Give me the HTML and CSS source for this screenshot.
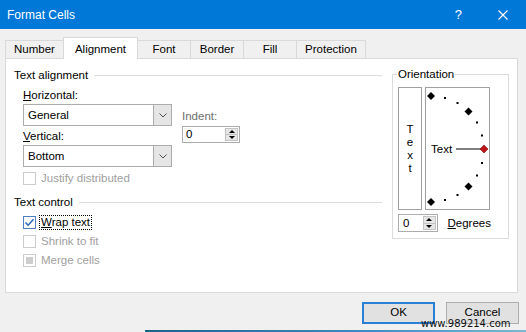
FILE: index.html
```html
<!DOCTYPE html>
<html lang="en">
<head>
    <meta charset="UTF-8">
    <meta name="viewport" content="width=device-width, initial-scale=1.0">
    <title>Format Cells</title>
    <link rel="stylesheet" href="styles.css">
</head>
<body>
    <div class="titlebar">
        <span class="title">Format Cells</span>
        <span class="help">?</span>
        <svg class="close" width="10" height="10" viewBox="0 0 10 10">
            <path d="M0.5 0.5 L9.5 9.5 M9.5 0.5 L0.5 9.5" stroke="#fff" stroke-width="1.1" fill="none"/>
        </svg>
    </div>

    <div class="tabs">
        <div class="tab">Number</div>
        <div class="tab active">Alignment</div>
        <div class="tab">Font</div>
        <div class="tab">Border</div>
        <div class="tab">Fill</div>
        <div class="tab">Protection</div>
    </div>

    <div class="panel">
        <div class="left-col">
            <div class="group-head"><span>Text alignment</span><i></i></div>
            <div class="align-row">
                <div class="align-main">
                    <div class="label"><u>H</u>orizontal:</div>
                    <div class="combo">
                        <span>General</span>
                        <b class="drop"><svg width="8" height="5" viewBox="0 0 8 5"><polyline points="0.5,0.5 4,4 7.5,0.5" fill="none" stroke="#505050"/></svg></b>
                    </div>
                    <div class="label vertical"><u>V</u>ertical:</div>
                    <div class="combo">
                        <span>Bottom</span>
                        <b class="drop"><svg width="8" height="5" viewBox="0 0 8 5"><polyline points="0.5,0.5 4,4 7.5,0.5" fill="none" stroke="#505050"/></svg></b>
                    </div>
                </div>
                <div class="indent-col">
                    <div class="label muted">Indent:</div>
                    <div class="spin indent">
                        <span>0</span>
                        <div class="arrows"><b class="up"></b><b class="down"></b></div>
                    </div>
                </div>
            </div>
            <div class="check disabled justify"><b class="box"></b><span>Justify distributed</span></div>

            <div class="group-head control"><span>Text control</span><i></i></div>
            <div class="check wrap">
                <b class="box checked"><svg width="11" height="11" viewBox="0 0 11 11"><polyline points="1.5,5.5 4.2,8.2 9.5,2.2" fill="none" stroke="#2a66b8" stroke-width="1.5"/></svg></b>
                <span class="focus"><u>W</u>rap text</span>
            </div>
            <div class="check disabled"><b class="box"></b><span>Shrink to fit</span></div>
            <div class="check disabled"><b class="box mixed"></b><span>Merge cells</span></div>
        </div>

        <fieldset class="orient">
            <legend>Orientation</legend>
            <div class="orient-boxes">
                <div class="vtext"><span>T</span><span>e</span><span>x</span><span>t</span></div>
                <div class="dial">
                    <svg width="63" height="121" viewBox="0 0 63 121">
                        <polygon points="5,4 9,8 5,12 1,8" fill="#000"/>
                        <rect x="18" y="9" width="2" height="2" fill="#000"/>
                        <rect x="30.5" y="14" width="2" height="2" fill="#000"/>
                        <polygon points="42.5,19.5 46.5,23.5 42.5,27.5 38.5,23.5" fill="#000"/>
                        <rect x="50" y="33.5" width="2" height="2" fill="#000"/>
                        <rect x="55" y="46.5" width="2" height="2" fill="#000"/>
                        <text x="5" y="65">Text</text>
                        <line x1="30" y1="61" x2="55" y2="61" stroke="#000" stroke-width="1"/>
                        <polygon points="58,57 62,61 58,65 54,61" fill="#c0141c" stroke="#7a0a0e" stroke-width="0.6"/>
                        <rect x="55" y="74" width="2" height="2" fill="#000"/>
                        <rect x="50" y="86.5" width="2" height="2" fill="#000"/>
                        <polygon points="42.5,94.5 46.5,98.5 42.5,102.5 38.5,98.5" fill="#000"/>
                        <rect x="30.5" y="106" width="2" height="2" fill="#000"/>
                        <rect x="18" y="111" width="2" height="2" fill="#000"/>
                        <polygon points="5,110 9,114 5,118 1,114" fill="#000"/>
                    </svg>
                </div>
            </div>
            <div class="deg-row">
                <div class="spin deg">
                    <span>0</span>
                    <div class="arrows"><b class="up"></b><b class="down"></b></div>
                </div>
                <span class="deg-label"><u>D</u>egrees</span>
            </div>
        </fieldset>
    </div>

    <div class="buttons">
        <button class="btn default">OK</button>
        <button class="btn">Cancel</button>
    </div>
    <div class="taskline"></div>

    <div class="watermark">www.989214.com</div>
</body>
</html>
```

FILE: styles.css
```css
body {
    font-family: "Liberation Sans", Arial, sans-serif;
    font-size: 11.5px;
    color: #000;
    background: #f0f0f0;
    margin: 0;
    width: 526px;
    height: 332px;
    overflow: hidden;
    position: relative;
}

u {
    text-decoration: underline;
    text-underline-offset: 1px;
}

.titlebar {
    height: 29px;
    background: #0078d7;
    color: #fff;
    display: flex;
    align-items: center;
    padding-left: 7px;
    font-size: 12px;
}

.title {
    flex: 1;
}

.help {
    font-size: 13px;
    margin-right: 36px;
}

.close {
    margin-right: 18px;
}

.tabs {
    display: flex;
    align-items: flex-end;
    padding: 8px 0 0 5px;
}

.tab {
    height: 18px;
    box-sizing: border-box;
    border: 1px solid #d9d9d9;
    border-bottom: none;
    padding: 0 8px;
    line-height: 17px;
    min-width: 54px;
    text-align: center;
    margin-right: -1px;
    background: #f0f0f0;
}

.tab.active {
    height: 22px;
    margin-bottom: -1px;
    padding: 3px 11px 0;
    background: #fff;
    position: relative;
    z-index: 1;
}

.panel {
    margin-left: 5px;
    width: 513px;
    height: 235px;
    box-sizing: border-box;
    border: 1px solid #d9d9d9;
    background: #fff;
    display: flex;
}

.left-col {
    width: 376px;
    box-sizing: border-box;
    padding: 9px 0 0 8px;
}

.group-head {
    display: flex;
    align-items: center;
    height: 14px;
    line-height: 14px;
}

.group-head i {
    flex: 1;
    border-top: 1px solid #dcdcdc;
    margin-left: 6px;
}

.group-head.control {
    margin-top: 10px;
}

.align-row {
    display: flex;
    margin-top: 6px;
    padding-left: 9px;
}

.align-main {
    width: 149px;
}

.label {
    height: 14px;
    line-height: 14px;
}

.label.vertical {
    margin-top: 3px;
}

.muted {
    color: #6d6d6d;
}

.combo {
    margin-top: 2px;
    height: 22px;
    box-sizing: border-box;
    border: 1px solid #acacac;
    background: #fff;
    display: flex;
}

.combo span {
    flex: 1;
    padding-left: 4px;
    line-height: 20px;
}

.combo .drop {
    width: 17px;
    border-left: 1px solid #acacac;
    background: #e5e5e5;
    display: flex;
    align-items: center;
    justify-content: center;
}

.indent-col {
    margin-left: 10px;
    padding-top: 21px;
}

.spin {
    display: flex;
    box-sizing: border-box;
    border: 1px solid #acacac;
    background: #fff;
}

.spin span {
    flex: 1;
    padding-left: 3px;
    line-height: 15px;
}

.spin.indent {
    margin-top: 3px;
    width: 58px;
    height: 17px;
}

.spin.deg {
    width: 53px;
    height: 18px;
}

.spin.deg span {
    padding-left: 4px;
    line-height: 16px;
}

.arrows {
    width: 15px;
    display: flex;
    flex-direction: column;
    padding: 1px;
    box-sizing: border-box;
}

.arrows b {
    flex: 1;
    display: flex;
    align-items: center;
    justify-content: center;
    background: #e6e6e6;
    border: 1px solid #c4c4c4;
}

.arrows b + b {
    border-top: none;
}

.arrows b::after {
    content: "";
    border-left: 3px solid transparent;
    border-right: 3px solid transparent;
}

.arrows .up::after {
    border-bottom: 3px solid #000;
}

.arrows .down::after {
    border-top: 3px solid #000;
}

.check {
    display: flex;
    align-items: center;
    height: 14px;
    margin: 5px 0 0 9px;
}

.check.justify {
    margin-top: 4px;
}

.check.wrap {
    margin-top: 6px;
}

.box {
    width: 13px;
    height: 13px;
    box-sizing: border-box;
    border: 1px solid #333;
    background: #fff;
    display: flex;
    align-items: center;
    justify-content: center;
    margin-right: 5px;
}

.box.checked {
    border-color: #4f7fbf;
}

.check.disabled {
    color: #a0a0a0;
}

.check.disabled .box {
    border-color: #cccccc;
}

.box.mixed::after {
    content: "";
    width: 7px;
    height: 7px;
    background: #cdcdcd;
}

.focus {
    margin-left: -2px;
    padding: 0 1px;
    border: 1px dotted #000;
    line-height: 13px;
}

.orient {
    margin: 8px 0 0 10px;
    width: 117px;
    min-width: 0;
    box-sizing: border-box;
    border: 1px solid #dcdcdc;
    padding: 6px 17px 6px 5px;
    align-self: flex-start;
}

.orient legend {
    padding: 0 1px;
    margin-left: -1px;
    line-height: 14px;
}

.orient-boxes {
    display: flex;
    gap: 3px;
    height: 123px;
}

.vtext {
    width: 24px;
    box-sizing: border-box;
    border: 1px solid #a0a0a0;
    display: flex;
    flex-direction: column;
    align-items: center;
    justify-content: center;
    line-height: 13px;
}

.dial {
    width: 65px;
    box-sizing: border-box;
    border: 1px solid #a0a0a0;
}

.dial svg {
    display: block;
}

.dial text {
    font-family: "Liberation Sans", Arial, sans-serif;
    font-size: 11.5px;
}

.deg-row {
    display: flex;
    align-items: center;
    margin-top: 4px;
}

.deg-label {
    margin-left: 10px;
}

.buttons {
    display: flex;
    justify-content: flex-end;
    gap: 11px;
    padding-right: 7px;
    margin-top: 9px;
}

.btn {
    width: 73px;
    height: 22px;
    box-sizing: border-box;
    border: 1px solid #adadad;
    background: #e1e1e1;
    font-family: "Liberation Sans", Arial, sans-serif;
    font-size: 11.5px;
    color: #000;
    padding: 0 0 2px;
}

.btn.default {
    border: 2px solid #2a80d4;
}

.taskline {
    margin: 6px 0 0 145px;
    height: 2px;
    background: linear-gradient(90deg, #1d6289, #3f8fbf 60%, #7fb6d6);
}

.watermark {
    position: absolute;
    left: 421px;
    top: 318px;
    font-family: "DejaVu Sans", Verdana, sans-serif;
    font-size: 10px;
    line-height: 11px;
    color: #111;
}
```
